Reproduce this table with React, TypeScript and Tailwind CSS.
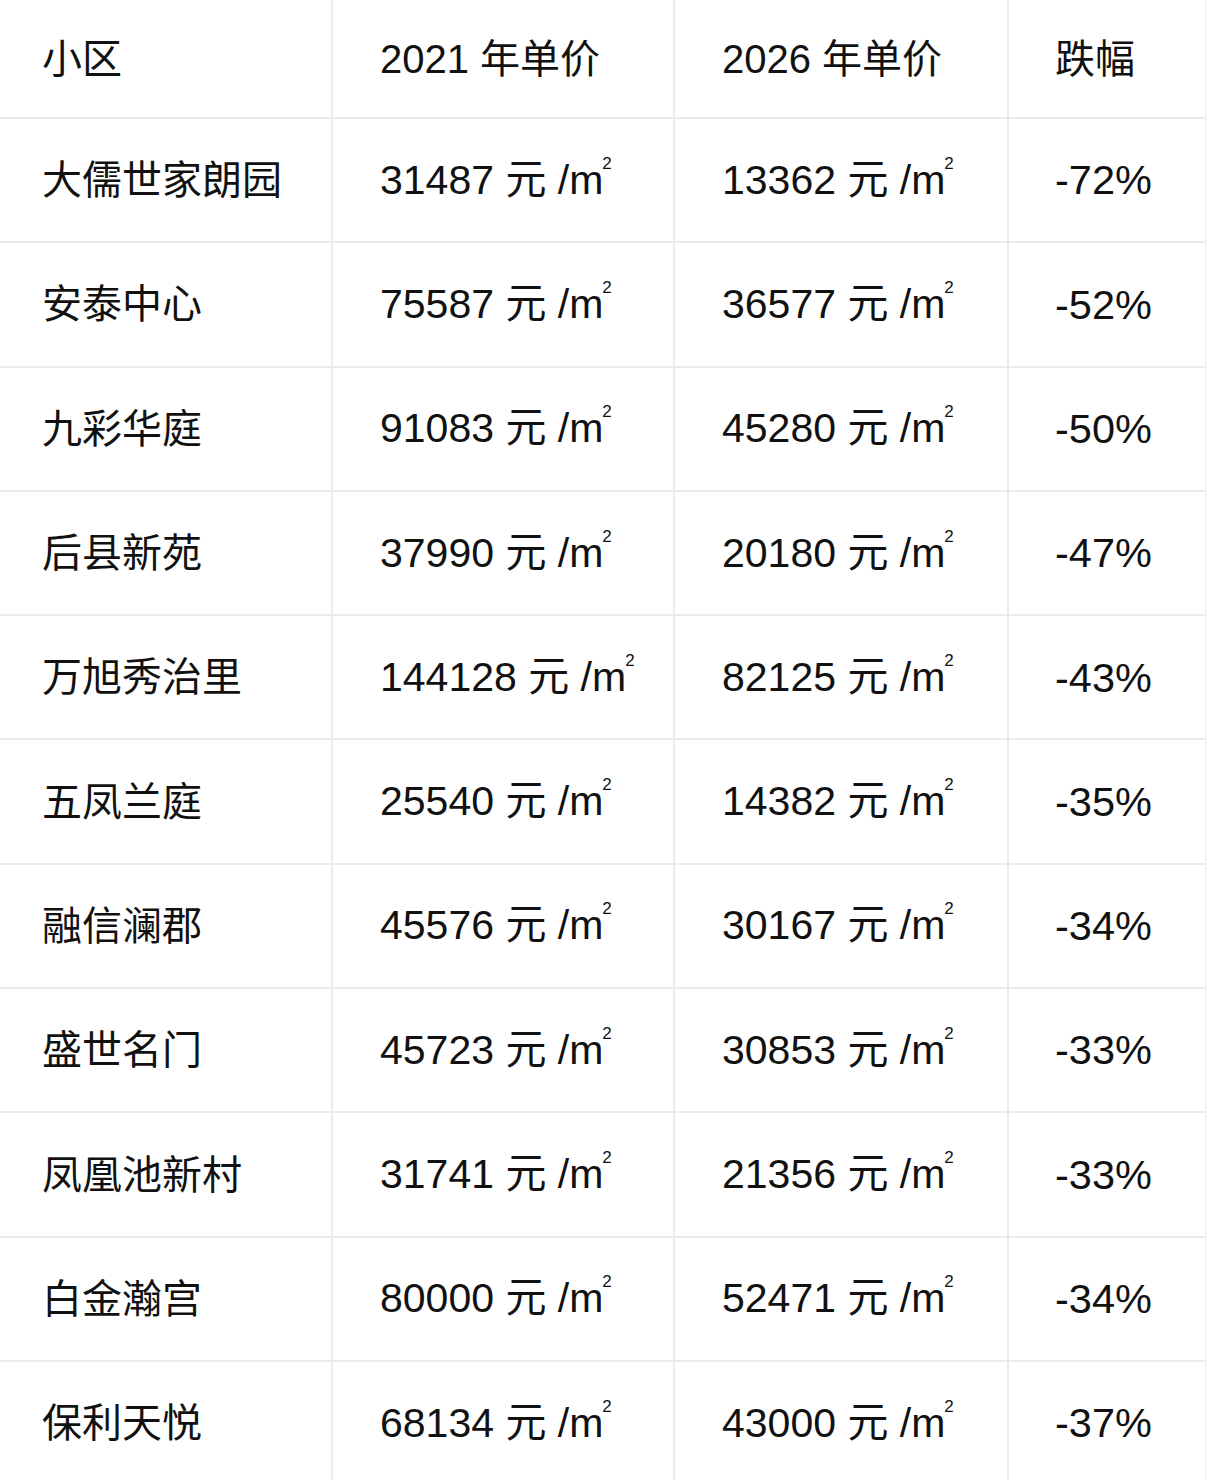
import React from "react";

const rows: [string, string, string, string][] = [
  ["大儒世家朗园", "31487", "13362", "-72%"],
  ["安泰中心", "75587", "36577", "-52%"],
  ["九彩华庭", "91083", "45280", "-50%"],
  ["后县新苑", "37990", "20180", "-47%"],
  ["万旭秀治里", "144128", "82125", "-43%"],
  ["五凤兰庭", "25540", "14382", "-35%"],
  ["融信澜郡", "45576", "30167", "-34%"],
  ["盛世名门", "45723", "30853", "-33%"],
  ["凤凰池新村", "31741", "21356", "-33%"],
  ["白金瀚宫", "80000", "52471", "-34%"],
  ["保利天悦", "68134", "43000", "-37%"],
];

function Price({ v }: { v: string }) {
  return (
    <span className="whitespace-nowrap">
      {v} 元 /m
      <span className="inline-block align-top text-[17px] leading-none -ml-[1px] mt-[-5px]">2</span>
    </span>
  );
}

export default function App() {
  const font = {
    fontFamily: '"Liberation Sans", "Noto Sans CJK SC", sans-serif',
  };
  const c1 = "flex items-center pl-[42px] border-r-2 border-b-2 border-[#ebebeb]";
  const c2 = "flex items-center pl-[47px] border-r-2 border-b-2 border-[#ebebeb]";
  const c3 = "flex items-center pl-[47px] border-r-2 border-b-2 border-[#ebebeb]";
  const c4 = "flex items-center pl-[46px] border-r border-b-2 border-[#ebebeb]";
  return (
    <div
      className="w-[1206px] h-[1480px] overflow-hidden bg-white text-[#111111] text-[40px] leading-none"
      style={font}
    >
      <div className="grid grid-cols-[333px_342px_334px_197px] auto-rows-[124.3px] [grid-template-rows:119px]">
        <div className={c1}>小区</div>
        <div className={c2}>2021 年单价</div>
        <div className={c3}>2026 年单价</div>
        <div className={c4}>跌幅</div>
        {rows.map((r) => (
          <React.Fragment key={r[0]}>
            <div className={c1}>{r[0]}</div>
            <div className={c2 + " text-[41px]"}>
              <Price v={r[1]} />
            </div>
            <div className={c3 + " text-[41px]"}>
              <Price v={r[2]} />
            </div>
            <div className={c4 + " text-[41.5px]"}>{r[3]}</div>
          </React.Fragment>
        ))}
      </div>
    </div>
  );
}
